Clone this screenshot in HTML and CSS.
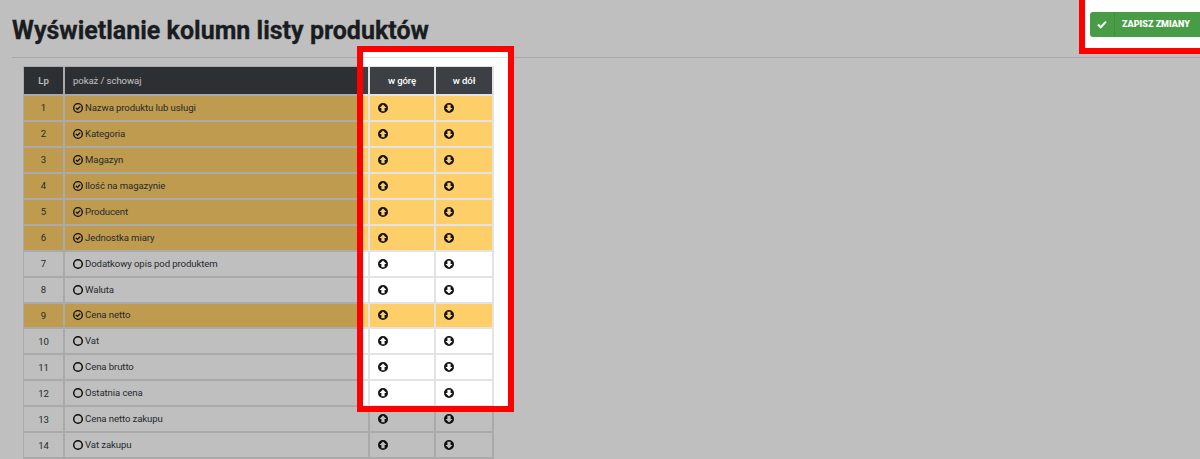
FILE: index.html
```html
<!DOCTYPE html>
<html lang="pl">
<head>
<meta charset="utf-8">
<title>Wyświetlanie kolumn listy produktów</title>
<link rel="stylesheet" href="styles.css">
</head>
<body>
<svg class="sprites" width="0" height="0" aria-hidden="true">
  <symbol id="up" viewBox="0 0 12 12"><path fill-rule="evenodd" fill="#141414" d="M6 1a5 5 0 1 0 0 10A5 5 0 0 0 6 1zM6 2.5 9.5 6H7.6v3.2H4.4V6H2.5z"/></symbol>
  <symbol id="down" viewBox="0 0 12 12"><path fill-rule="evenodd" fill="#141414" d="M6 1a5 5 0 1 0 0 10A5 5 0 0 0 6 1zM6 9.5 9.5 6H7.6V2.8H4.4V6H2.5z"/></symbol>
  <symbol id="on" viewBox="0 0 12 12"><circle cx="6" cy="6" r="4.3" fill="none" stroke="#141414" stroke-width="1.3"/><path d="M3.9 5.9 5.4 7.4 8.2 4.6" fill="none" stroke="#141414" stroke-width="1.3"/></symbol>
  <symbol id="off" viewBox="0 0 12 12"><circle cx="6" cy="6" r="4.3" fill="none" stroke="#141414" stroke-width="1.5"/></symbol>
</svg>
<div class="page">
  <header class="head">
    <h1 class="title">Wyświetlanie kolumn listy produktów</h1>
    <button class="save" type="button">
      <span class="save-icon"><svg width="10" height="9" viewBox="0 0 10 9"><path d="M1 4.6 3.7 7.2 9 1.6" fill="none" stroke="#fff" stroke-width="2.1"/></svg></span>
      <span class="save-label">ZAPISZ ZMIANY</span>
    </button>
  </header>
  <table class="cols">
    <thead>
      <tr><th class="c-lp">Lp</th><th class="c-name">pokaż / schowaj</th><th class="c-up">w górę</th><th class="c-down">w dół</th></tr>
    </thead>
    <tbody>
      <tr class="sel"><td class="c-lp">1</td><td class="c-name"><svg class="ic"><use href="#on"/></svg>Nazwa produktu lub usługi</td><td><svg class="ic"><use href="#up"/></svg></td><td><svg class="ic"><use href="#down"/></svg></td></tr>
      <tr class="sel"><td class="c-lp">2</td><td class="c-name"><svg class="ic"><use href="#on"/></svg>Kategoria</td><td><svg class="ic"><use href="#up"/></svg></td><td><svg class="ic"><use href="#down"/></svg></td></tr>
      <tr class="sel"><td class="c-lp">3</td><td class="c-name"><svg class="ic"><use href="#on"/></svg>Magazyn</td><td><svg class="ic"><use href="#up"/></svg></td><td><svg class="ic"><use href="#down"/></svg></td></tr>
      <tr class="sel"><td class="c-lp">4</td><td class="c-name"><svg class="ic"><use href="#on"/></svg>Ilość na magazynie</td><td><svg class="ic"><use href="#up"/></svg></td><td><svg class="ic"><use href="#down"/></svg></td></tr>
      <tr class="sel"><td class="c-lp">5</td><td class="c-name"><svg class="ic"><use href="#on"/></svg>Producent</td><td><svg class="ic"><use href="#up"/></svg></td><td><svg class="ic"><use href="#down"/></svg></td></tr>
      <tr class="sel"><td class="c-lp">6</td><td class="c-name"><svg class="ic"><use href="#on"/></svg>Jednostka miary</td><td><svg class="ic"><use href="#up"/></svg></td><td><svg class="ic"><use href="#down"/></svg></td></tr>
      <tr><td class="c-lp">7</td><td class="c-name"><svg class="ic"><use href="#off"/></svg>Dodatkowy opis pod produktem</td><td><svg class="ic"><use href="#up"/></svg></td><td><svg class="ic"><use href="#down"/></svg></td></tr>
      <tr><td class="c-lp">8</td><td class="c-name"><svg class="ic"><use href="#off"/></svg>Waluta</td><td><svg class="ic"><use href="#up"/></svg></td><td><svg class="ic"><use href="#down"/></svg></td></tr>
      <tr class="sel"><td class="c-lp">9</td><td class="c-name"><svg class="ic"><use href="#on"/></svg>Cena netto</td><td><svg class="ic"><use href="#up"/></svg></td><td><svg class="ic"><use href="#down"/></svg></td></tr>
      <tr><td class="c-lp">10</td><td class="c-name"><svg class="ic"><use href="#off"/></svg>Vat</td><td><svg class="ic"><use href="#up"/></svg></td><td><svg class="ic"><use href="#down"/></svg></td></tr>
      <tr><td class="c-lp">11</td><td class="c-name"><svg class="ic"><use href="#off"/></svg>Cena brutto</td><td><svg class="ic"><use href="#up"/></svg></td><td><svg class="ic"><use href="#down"/></svg></td></tr>
      <tr><td class="c-lp">12</td><td class="c-name"><svg class="ic"><use href="#off"/></svg>Ostatnia cena</td><td><svg class="ic"><use href="#up"/></svg></td><td><svg class="ic"><use href="#down"/></svg></td></tr>
      <tr><td class="c-lp">13</td><td class="c-name"><svg class="ic"><use href="#off"/></svg>Cena netto zakupu</td><td><svg class="ic"><use href="#up"/></svg></td><td><svg class="ic"><use href="#down"/></svg></td></tr>
      <tr><td class="c-lp">14</td><td class="c-name"><svg class="ic"><use href="#off"/></svg>Vat zakupu</td><td><svg class="ic"><use href="#up"/></svg></td><td><svg class="ic"><use href="#down"/></svg></td></tr>
    </tbody>
  </table>
</div>
<div class="dim"></div>
<div class="mark mark-table"></div>
<div class="mark mark-save"></div>
</body>
</html>
```
FILE: styles.css
```css
* { box-sizing: border-box; }
html, body { margin: 0; height: 100%; overflow: hidden; }
body { background: #fff; font-family: Roboto, "Liberation Sans", sans-serif; color: #141414; position: relative; }
.sprites { position: absolute; }
.page { display: flex; flex-direction: column; }
.head { display: flex; justify-content: space-between; align-items: flex-start; height: 58px; margin-left: 12px; border-bottom: 1px solid #e3e3e3; }
.title { margin: 16px 0 0; font-size: 25px; line-height: 30px; font-weight: 700; color: #23272b; -webkit-text-stroke: .3px #23272b; }
.save { display: flex; align-items: stretch; height: 25px; margin-top: 12px; width: 110px; padding: 0; border: 0; border-radius: 3px 0 0 3px; background: #479c45; color: #fff; font-family: inherit; }
.save-icon { width: 25px; display: flex; align-items: center; justify-content: center; border-right: 1px solid #3f8f3d; }
.save-label { flex: 1; line-height: 25px; font-size: 9px; font-weight: 900; text-align: left; padding-left: 7px; white-space: nowrap; }
.cols { margin: 8px 0 0 23px; width: 471px; table-layout: fixed; border-collapse: separate; border-spacing: 0; font-size: 9.6px; letter-spacing: -.1px; }
.cols th { height: 30px; background: #3c4045; color: #fff; font-weight: 500; border: 1px solid #e3e3e3; border-width: 1px 2px 2px 0; padding: 0; }
.cols th:first-child, .cols td:first-child { border-left: 1px solid #e3e3e3; }
.cols td { height: 25.95px; padding: 0 0 0 7px; border-right: 2px solid #e3e3e3; border-bottom: 2px solid #e3e3e3; color: #33383d; }
.cols th.c-name { text-align: left; padding-left: 8px; font-weight: 400; }
.cols .c-lp { width: 42px; text-align: center; padding-left: 0; }
.cols .c-name { width: 305px; }
.cols .c-up { width: 66px; }
.cols .c-down { width: 58px; }
.cols td.c-name { padding-left: 6.5px; }
.sel td { background: #fecf69; }
.ic { width: 12px; height: 12px; vertical-align: -3px; }
.c-name .ic { margin-right: 1.5px; }
.dim { position: absolute; inset: 0; background: rgba(0,0,0,.25); clip-path: path(evenodd, "M0 0H1200V459H0Z M357 46H514V412H357Z M1079 0H1200V54H1079Z"); }
.mark { position: absolute; border: 6px solid #fe0000; }
.mark-table { left: 357px; top: 46px; width: 157px; height: 366px; }
.mark-save { left: 1079px; top: -6px; width: 127px; height: 60px; }
```
